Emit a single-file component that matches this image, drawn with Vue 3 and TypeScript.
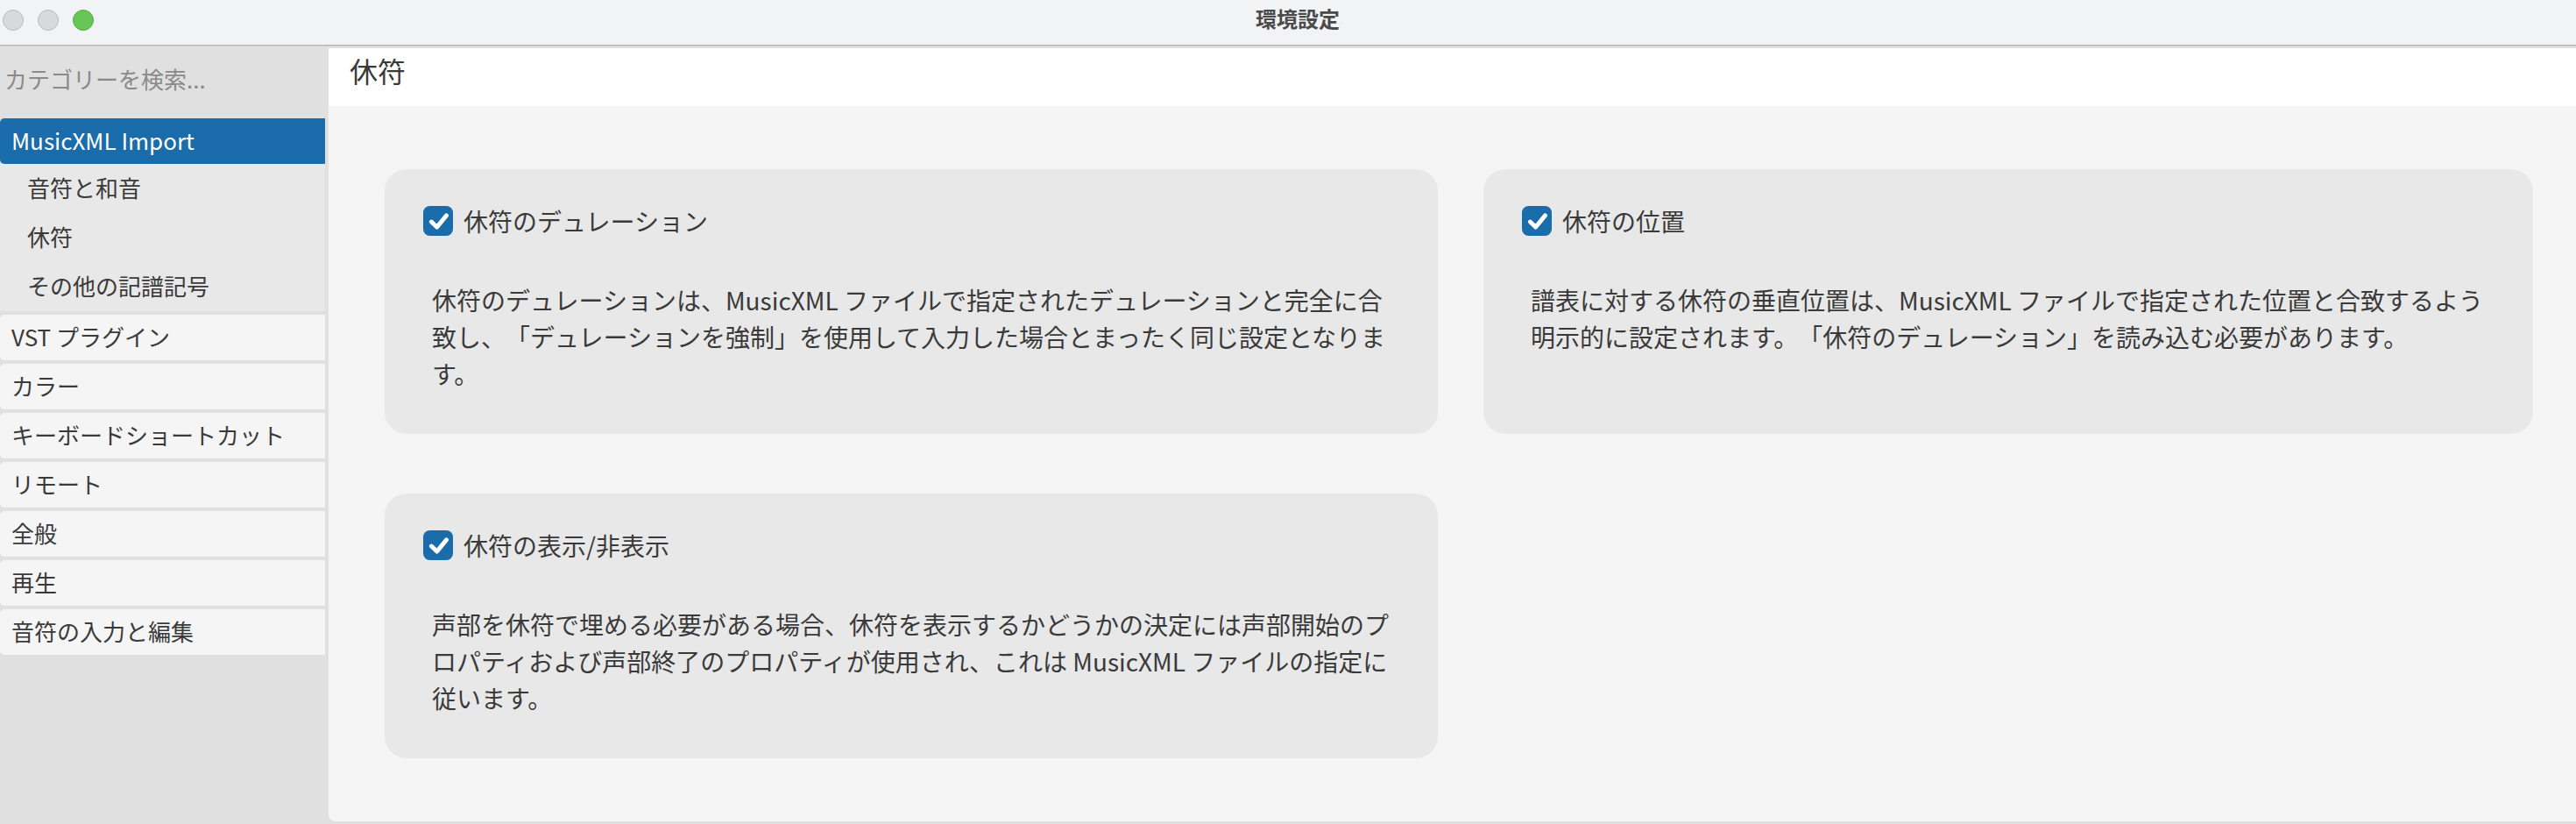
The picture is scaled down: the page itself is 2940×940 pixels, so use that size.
<script setup lang="ts">
interface Category {
  label: string
  active?: boolean
  children?: string[]
}

interface Option {
  title: string
  lines: string[]
}

const categories: Category[] = [
  { label: 'MusicXML Import', active: true, children: ['音符と和音', '休符', 'その他の記譜記号'] },
  { label: 'VST プラグイン' },
  { label: 'カラー' },
  { label: 'キーボードショートカット' },
  { label: 'リモート' },
  { label: '全般' },
  { label: '再生' },
  { label: '音符の入力と編集' },
]

const options: Option[] = [
  {
    title: '休符のデュレーション',
    lines: [
      '休符のデュレーションは、MusicXML ファイルで指定されたデュレーションと完全に合',
      '致し、「デュレーションを強制」を使用して入力した場合とまったく同じ設定となりま',
      'す。',
    ],
  },
  {
    title: '休符の位置',
    lines: [
      '譜表に対する休符の垂直位置は、MusicXML ファイルで指定された位置と合致するよう',
      '明示的に設定されます。「休符のデュレーション」を読み込む必要があります。',
    ],
  },
  {
    title: '休符の表示/非表示',
    lines: [
      '声部を休符で埋める必要がある場合、休符を表示するかどうかの決定には声部開始のプ',
      'ロパティおよび声部終了のプロパティが使用され、これは MusicXML ファイルの指定に',
      '従います。',
    ],
  },
]
</script>

<template>
  <div class="window">
    <header class="titlebar">
      <div class="lights">
        <span class="light"></span>
        <span class="light"></span>
        <span class="light green"></span>
      </div>
      <div class="window-title">環境設定</div>
    </header>
    <div class="body">
      <aside class="sidebar">
        <div class="search">カテゴリーを検索...</div>
        <nav class="categories">
          <div v-for="c in categories" :key="c.label" class="group">
            <div class="category" :class="{ active: c.active }">{{ c.label }}</div>
            <div v-if="c.children" class="children">
              <div v-for="s in c.children" :key="s" class="child">{{ s }}</div>
            </div>
          </div>
        </nav>
      </aside>
      <main class="main">
        <h1 class="heading">休符</h1>
        <div class="cards">
          <section v-for="o in options" :key="o.title" class="card">
            <div class="card-title">
              <svg class="check" viewBox="0 0 34 34">
                <rect width="34" height="34" rx="7.5" fill="#1b6cab" />
                <path d="M9.4 18 L15.6 24.1 L26.5 10.9" fill="none" stroke="#fff" stroke-width="4.9" stroke-linecap="round" stroke-linejoin="round" />
              </svg>
              <span>{{ o.title }}</span>
            </div>
            <div class="description">
              <div v-for="l in o.lines" :key="l">{{ l }}</div>
            </div>
          </section>
        </div>
      </main>
    </div>
  </div>
</template>

<style>
body {
  margin: 0;
}
</style>

<style scoped>
.window {
  display: flex;
  flex-direction: column;
  width: 2940px;
  height: 940px;
  overflow: hidden;
  background: #e0e0e0;
  color: #3a3a3a;
  font-family: "Noto Sans CJK JP", sans-serif;
  font-size: 26px;
  white-space: pre;
  text-spacing-trim: space-all;
}
.titlebar {
  display: flex;
  align-items: center;
  box-sizing: border-box;
  height: 53px;
  padding-bottom: 6px;
  background: #f1f3f5;
  border-bottom: 1px solid #cfcfcf;
  box-shadow: inset 0 -1px #b4b5b6;
}
.lights {
  display: flex;
  gap: 16px;
  padding-left: 3px;
}
.light {
  box-sizing: border-box;
  width: 24px;
  height: 24px;
  border: 1px solid #b9babb;
  border-radius: 50%;
  background: #d8d9db;
}
.light.green {
  border-color: #55ab45;
  background: #67c656;
}
.window-title {
  flex: 1;
  margin-right: 85px;
  padding-bottom: 4px;
  text-align: center;
  font-size: 24px;
  font-weight: 700;
  line-height: 38px;
  color: #4a4a4a;
}
.body {
  display: flex;
  flex: 1;
  gap: 4px;
}
.sidebar {
  width: 371px;
}
.search {
  height: 82px;
  padding-left: 5px;
  line-height: 73px;
  color: #8a8a8a;
}
.categories {
  display: flex;
  flex-direction: column;
  gap: 4px;
}
.category {
  height: 52px;
  padding-left: 13px;
  border-radius: 5px 0 0 5px;
  background: #f5f5f5;
  line-height: 49px;
}
.category.active {
  background: #1b6cab;
  color: #fff;
}
.children {
  background: #e8e8e8;
}
.child {
  height: 56px;
  padding-left: 31px;
  line-height: 53px;
}
.main {
  flex: 1;
  margin: 2px 0 3px;
  border-radius: 0 0 0 8px;
  background: #f5f5f5;
  overflow: hidden;
}
.heading {
  height: 66px;
  margin: 0;
  padding-left: 24px;
  background: #fff;
  font-size: 32px;
  font-weight: 400;
  line-height: 51px;
}
.cards {
  display: grid;
  grid-template-columns: 1202px 1198px;
  grid-auto-rows: 302px;
  gap: 68px 52px;
  padding: 72px 0 0 64px;
}
.card {
  box-sizing: border-box;
  padding: 42px 0 0 44px;
  border-radius: 25px;
  background: #e8e8e8;
  font-size: 28px;
}
.card-title {
  display: flex;
  gap: 12px;
  height: 34px;
  line-height: 34px;
}
.check {
  display: block;
  width: 34px;
  height: 34px;
}
.description {
  padding: 52px 0 0 10px;
  line-height: 42px;
}
</style>
